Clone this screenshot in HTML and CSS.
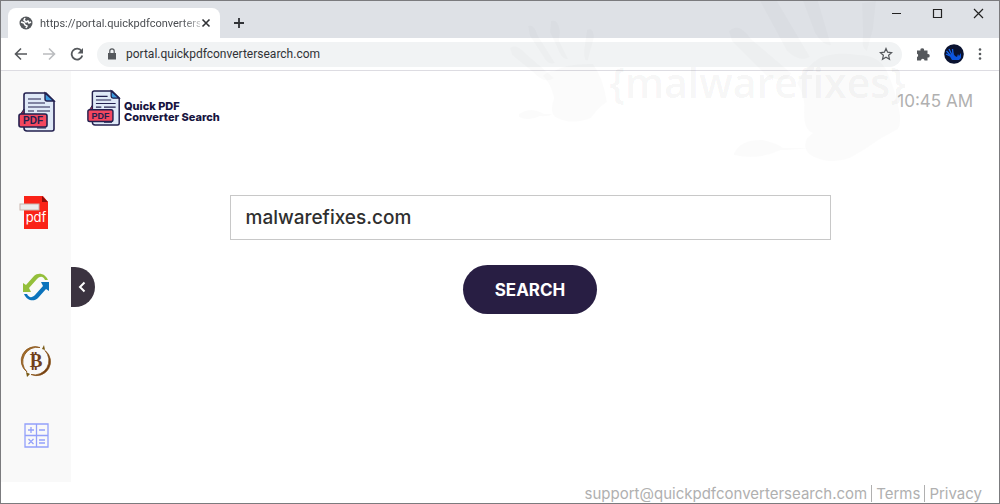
FILE: index.html
```html
<!DOCTYPE html>
<html lang="en">
<head>
    <meta charset="UTF-8">
    <title>Quick PDF Converter Search</title>
    <link rel="stylesheet" href="styles.css">
</head>
<body>
<svg class="defs" width="0" height="0" aria-hidden="true">
    <symbol id="pdf-doc" viewBox="0 0 38 42">
        <path d="M8 2h20l8 8v28q0 2-2 2H9q-3 0-3-3V4q0-2 2-2z" fill="#dfe9f7" stroke="#23204f" stroke-width="1.6"/>
        <path d="M27 2v6q0 2 2 2h7z" fill="#3d9be0" stroke="#23204f" stroke-width="1.4"/>
        <path d="M10 8h13M10 12h17M10 16h22M10 20h6M19 20h13M19 37h9" stroke="#23204f" stroke-width="1.2"/>
        <path d="M6 18L2 24h4z" fill="#a82547" stroke="#23204f"/>
        <rect x="1" y="23" width="28" height="13" rx="2" fill="#f4475f" stroke="#23204f" stroke-width="1.6"/>
        <text x="15" y="33" text-anchor="middle" class="pdf-label">PDF</text>
    </symbol>
</svg>

<div class="window">
    <header class="tabstrip">
        <div class="tab">
            <svg width="14" height="14" viewBox="0 0 14 14"><circle cx="7" cy="7" r="6.5" fill="#55585c"/><path d="M2 6l3 1 1 2 2 1-1 2M6 2l-1 2 2 2 2-1 1 2 2-1" fill="none" stroke="#fff" stroke-width="1.600"/></svg>
            <span class="tab-title">https://portal.quickpdfconverters</span>
            <button class="icon-btn" aria-label="Close tab"><svg width="10" height="10" viewBox="0 0 10 10"><path d="M1.500 1.500l7 7m0-7l-7 7" stroke="#303236" stroke-width="1.600"/></svg></button>
        </div>
        <button class="icon-btn new-tab" aria-label="New tab"><svg width="12" height="12" viewBox="0 0 12 12"><path d="M6 1v10M1 6h10" stroke="#303236" stroke-width="1.800"/></svg></button>
        <div class="window-buttons">
            <button class="icon-btn" aria-label="Minimize"><svg width="11" height="11" viewBox="0 0 11 11"><path d="M1 5.500h9" stroke="#222"/></svg></button>
            <button class="icon-btn" aria-label="Maximize"><svg width="11" height="11" viewBox="0 0 11 11"><path d="M1.500 1.500h8v8h-8z" fill="none" stroke="#222" stroke-width="1.200"/></svg></button>
            <button class="icon-btn" aria-label="Close"><svg width="11" height="11" viewBox="0 0 11 11"><path d="M1 1l9 9m0-9l-9 9" stroke="#222" stroke-width="1.200"/></svg></button>
        </div>
    </header>

    <nav class="toolbar">
        <button class="icon-btn" aria-label="Back"><svg width="14" height="14" viewBox="0 0 14 14"><path d="M13 7H2m5-5.500L1.500 7 7 12.500" fill="none" stroke="#55585c" stroke-width="1.600"/></svg></button>
        <button class="icon-btn" aria-label="Forward"><svg width="14" height="14" viewBox="0 0 14 14"><path d="M1 7h11M7 1.500L12.500 7 7 12.500" fill="none" stroke="#babcbf" stroke-width="1.600"/></svg></button>
        <button class="icon-btn" aria-label="Reload"><svg width="14" height="14" viewBox="0 0 14 14"><path d="M11.500 4A5.400 5.400 0 1 0 12.300 8.500" fill="none" stroke="#55585c" stroke-width="1.800"/><path d="M13 1v5.500H7.500z" fill="#55585c"/></svg></button>
        <div class="address">
            <svg width="10" height="12" viewBox="0 0 10 12"><path d="M1 5h8v6.500H1z" fill="#55585c"/><path d="M2.800 5V3a2.200 2.200 0 0 1 4.400 0v2" fill="none" stroke="#55585c" stroke-width="1.200"/></svg>
            <input class="url" type="text" aria-label="Address" value="portal.quickpdfconvertersearch.com">
            <button class="icon-btn" aria-label="Bookmark"><svg width="14" height="14" viewBox="0 0 14 14"><path d="M7 1.500l1.600 3.700 4 .4-3 2.700.9 4L7 10.200l-3.500 2.100.9-4-3-2.700 4-.4z" fill="none" stroke="#55585c" stroke-width="1.200"/></svg></button>
        </div>
        <button class="icon-btn" aria-label="Extensions"><svg width="14" height="14" viewBox="0 0 14 14"><path d="M1 3.500h3.500a1.800 1.800 0 1 1 3.500 0h3.500V7a1.800 1.800 0 1 1 0 3.500V13.500H8.500a1.700 1.700 0 0 0-3.500 0H1V10a1.700 1.700 0 0 0 0-3.200z" fill="#55585c"/></svg></button>
        <button class="icon-btn" aria-label="Profile"><svg width="20" height="20" viewBox="0 0 20 20"><circle cx="10" cy="10" r="9.800" fill="#0a1230"/><path d="M6 12L2 10M6 11L2.500 7M7.500 10L5 5M9 10L8.500 5" stroke="#1565f0" stroke-width="1.300"/><path d="M5 11l4-2 2 3 2 1 1-3 1 2 2-3v5l-2 2H8z" fill="#0c55e0"/></svg></button>
        <button class="icon-btn" aria-label="Menu"><svg width="4" height="14" viewBox="0 0 4 14"><g fill="#55585c"><circle cx="2" cy="2.500" r="1.300"/><circle cx="2" cy="7" r="1.300"/><circle cx="2" cy="11.500" r="1.300"/></g></svg></button>
    </nav>

    <div class="page">
        <div class="content">
            <aside class="sidebar">
                <a href="#" class="side-logo" aria-label="Home"><svg width="40" height="42"><use href="#pdf-doc"/></svg></a>
                <a href="#" aria-label="PDF"><svg width="34" height="36" viewBox="0 0 34 36"><path d="M5 1h19l5 6v27H5z" fill="#fa2318"/><path d="M23 1v6h6z" fill="#8d0d0b"/><rect x="1" y="9" width="19" height="6" fill="#ececec" stroke="#c9b6ad"/><text x="17" y="27" text-anchor="middle" class="pdf-word">pdf</text></svg></a>
                <a href="#" aria-label="Convert"><svg width="28" height="28" viewBox="0 0 28 28"><path d="M26 7C23 0 16-1 12 3L4 12l-3-2v9h8l-2-4 8-9c3-3 6-3 8 1z" fill="#94bf3b"/><path d="M2 21c3 7 10 8 14 4l8-9 3 2V9h-8l2 4-8 9c-3 3-6 3-8-1z" fill="#0b73bc"/></svg></a>
                <a href="#" aria-label="Bitcoin"><svg width="32" height="34" viewBox="0 0 32 34"><path d="M20 3.500A14 14 0 0 0 7 28 14.500 14.500 0 0 1 20 3.500z" fill="#a5702c" stroke="#8a561c" stroke-width=".8"/><path d="M11 30.500A14 14 0 0 0 25 6.500 14.500 14.500 0 0 1 11 30.500z" fill="#6f3b12" stroke="#8a561c" stroke-width=".8"/><path d="M24 1l1 5-3-1zM7 33l-1-5 4 2z" fill="#7a5a14"/><text x="16" y="23" text-anchor="middle" class="coin">₿</text></svg></a>
                <a href="#" aria-label="Calculator"><svg width="25" height="25" viewBox="0 0 25 25"><path d="M1 1h23v23H1zM12.500 1v23M1 12.500h23M4 7h6M7 4v6M15 7h6M4.500 16l5 5m0-5l-5 5M15 17h6M15 20h6" fill="none" stroke="#93a0fa" stroke-width="1.300"/></svg></a>
            </aside>
            <button class="collapse" aria-label="Collapse sidebar"><svg width="8" height="12" viewBox="0 0 8 12"><path d="M6.500 1.500L2 6l4.500 4.500" fill="none" stroke="#fff" stroke-width="2"/></svg></button>
            <main class="main">
                <div class="top">
                    <a href="#" class="brand"><svg width="34" height="38"><use href="#pdf-doc"/></svg><span>Quick PDF<br>Converter Search</span></a>
                    <time class="clock">10:45 AM</time>
                </div>
                <form class="search">
                    <input class="search-box" type="text" aria-label="Search" value="malwarefixes.com">
                    <button class="search-btn" type="button">SEARCH</button>
                </form>
            </main>
        </div>
        <footer class="footer">
            <a href="#">support@quickpdfconvertersearch.com</a>
            <a href="#">Terms</a>
            <a href="#">Privacy</a>
        </footer>
    </div>

    <div class="watermark" aria-hidden="true">
        <svg width="405" height="170" viewBox="0 0 405 170">
            <path d="M53 70Q66 62 92 63Q102 76 106 101Q98 106 90 117Q70 125 54 116Q48 111 53 97Q50 83 42 75Q46 70 53 70z"/>
            <path d="M9 47Q15 42 24 52L53 77Q44 84 32 71L11 54zM27 25Q33 22 37 35L54 62Q47 65 42 55L29 35zM50 20Q57 17 59 30L58 40 67 58Q61 60 56 46L49 31zM86 29Q92 25 93 36L87 59Q83 62 83 50zM18 113Q30 105 43 113H51Q48 116 39 115 28 121 18 116z"/>
            <path d="M320 56Q338 50 358 54 378 54 386 70 394 88 398 108 401 122 397 128L379 138Q364 149 349 157 330 164 313 156 300 150 306 137L312 132Q303 130 303 112 305 96 296 82 306 64 320 56z"/>
            <path d="M228 30Q238 20 250 38L290 72Q286 84 266 75L231 40zM259 0H276L309 56Q299 62 286 50zM302 0H317L330 44Q323 46 314 32zM361 2L375 0 372 28 366 50Q360 48 362 34zM233 152Q240 138 262 139 276 142 282 147H308Q292 149 280 149 256 160 233 154z"/>
        </svg>
        <span>{malwarefixes}</span>
    </div>
</div>
</body>
</html>
```
FILE: styles.css
```css
* {
    box-sizing: border-box;
}

body {
    margin: 0;
    font-family: "Inter", "Liberation Sans", sans-serif;
}

.defs {
    position: absolute;
}

.window {
    position: relative;
    display: flex;
    flex-direction: column;
    min-height: 100vh;
    border: 1px solid #7b7b7e;
    background: #fff;
    overflow: hidden;
}

.icon-btn {
    display: flex;
    align-items: center;
    justify-content: center;
    padding: 0;
    border: 0;
    background: none;
}

svg {
    display: block;
    flex-shrink: 0;
}

/* browser chrome */
.tabstrip {
    display: flex;
    align-items: flex-end;
    height: 37px;
    padding-left: 7px;
    background: #dee1e6;
}

.tab {
    display: flex;
    align-items: center;
    gap: 7px;
    width: 212px;
    height: 30px;
    padding: 0 9px 0 11px;
    border-radius: 8px 8px 0 0;
    background: #fff;
}

.tab-title {
    flex: 1;
    margin-right: -6px;
    overflow: hidden;
    white-space: nowrap;
    font: 11px "Roboto", sans-serif;
    color: #4a4d51;
    mask-image: linear-gradient(to right, #000 88%, rgba(0, 0, 0, 0.3));
}

.new-tab {
    width: 24px;
    height: 30px;
    margin-left: 7px;
}

.window-buttons {
    display: flex;
    align-self: flex-start;
    gap: 30px;
    margin-left: auto;
    padding: 7px 15px 0 0;
}

.toolbar {
    display: flex;
    align-items: center;
    gap: 14px;
    height: 33px;
    padding: 0 17px 0 13px;
    border-bottom: 1px solid #dddce2;
}

.address {
    display: flex;
    flex: 1;
    align-items: center;
    gap: 9px;
    height: 25px;
    margin-left: -1px;
    padding: 0 9px 0 10px;
    border-radius: 13px;
    background: #f1f3f4;
}

.url {
    flex: 1;
    min-width: 0;
    padding: 0;
    border: 0;
    background: none;
    font: 12px "Roboto", sans-serif;
    color: #303236;
}

/* page */
.page {
    display: flex;
    flex: 1;
    flex-direction: column;
}

.content {
    display: flex;
    flex: 1;
}

.sidebar {
    display: flex;
    flex-direction: column;
    align-items: center;
    gap: 38px;
    width: 70px;
    padding: 20px 0 24px;
    background: #f9f9f9;
}

.sidebar a {
    display: flex;
    align-items: center;
    height: 36px;
}

.sidebar .side-logo {
    height: 42px;
    margin: 0 0 24px 2px;
}

.pdf-label {
    font: bold 10px "Liberation Sans", sans-serif;
    fill: #23204f;
}

.pdf-word {
    font: 13px "Inter", sans-serif;
    fill: #fff;
}

.coin {
    font: bold 19px "Liberation Serif", "DejaVu Serif", serif;
    fill: #70401b;
}

.collapse {
    display: flex;
    align-items: center;
    align-self: center;
    width: 24px;
    height: 40px;
    margin-top: 20px;
    padding: 0 7px;
    border: 0;
    border-radius: 0 20px 20px 0;
    background: #3b3340;
}

.main {
    flex: 1;
    margin-left: -24px;
    padding: 18px 26px 0 16px;
}

.top {
    display: flex;
    align-items: flex-start;
    justify-content: space-between;
}

.brand {
    display: flex;
    align-items: center;
    gap: 3px;
    font-size: 11px;
    font-weight: 800;
    line-height: 11px;
    color: #171440;
    text-decoration: none;
}

.brand span {
    padding-top: 8px;
}

.clock {
    font-size: 17px;
    line-height: 24px;
    color: #b0b0b0;
}

.search {
    display: flex;
    flex-direction: column;
    align-items: center;
    gap: 25px;
    padding-top: 68px;
}

.search-box {
    width: 100%;
    max-width: 601px;
    height: 45px;
    padding: 0 15px;
    border: 1px solid #c8c8c8;
    font: 500 19px "Inter", sans-serif;
    color: #2f2f2f;
}

.search-btn {
    width: 134px;
    height: 49px;
    border: 0;
    border-radius: 25px;
    background: #281e43;
    font: bold 17px "Inter", sans-serif;
    color: #fff;
}

.footer {
    display: flex;
    justify-content: flex-end;
    padding: 3px 13px 1px 0;
    font-size: 15px;
    line-height: 17px;
}

.footer a {
    padding: 0 4px;
    color: #b0b0b0;
    text-decoration: none;
}

.footer a + a {
    border-left: 1px solid #b0b0b0;
}

/* faint stamp lying over the window */
.watermark {
    position: absolute;
    top: 0;
    right: 93px;
    width: 405px;
    height: 170px;
    color: rgba(0, 0, 0, 0.05);
    pointer-events: none;
}

.watermark svg {
    fill: rgba(0, 0, 0, 0.015);
}

.watermark span {
    position: absolute;
    top: 57px;
    right: 0;
    font: 600 41px/48px "Open Sans", sans-serif;
}
```
